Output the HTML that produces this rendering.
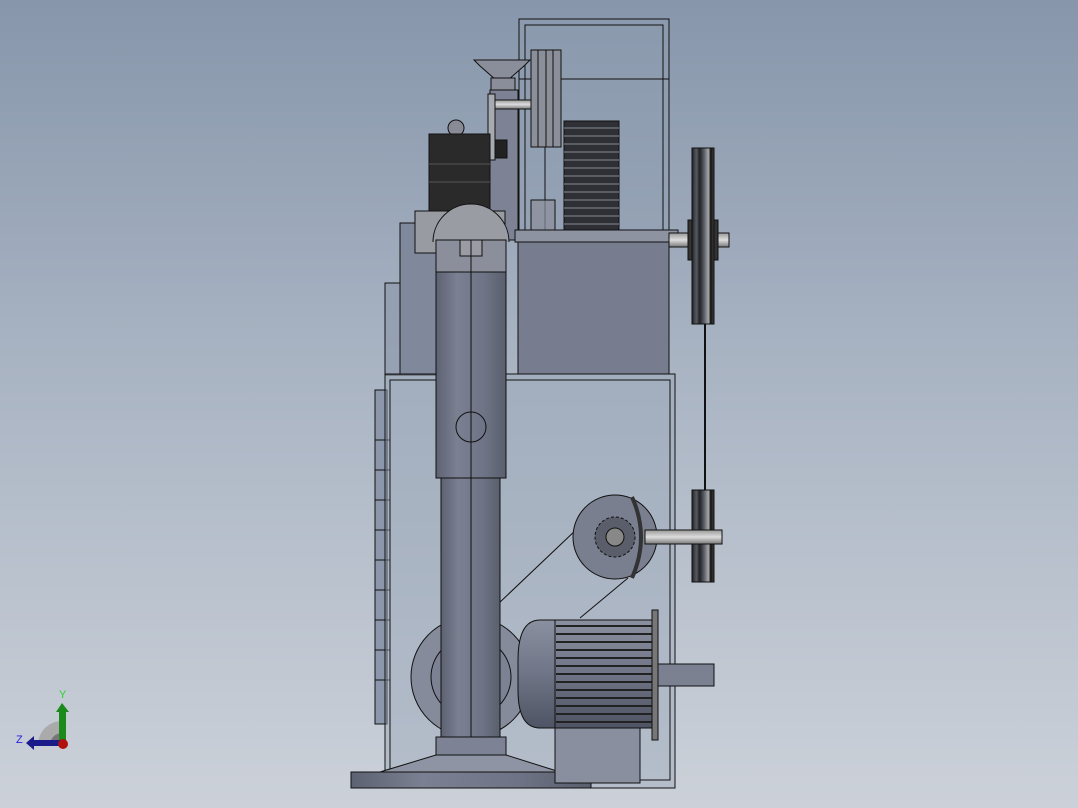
<!DOCTYPE html>
<html><head><meta charset="utf-8"><style>
html,body{margin:0;padding:0;width:1078px;height:808px;overflow:hidden}
body{background:linear-gradient(#8796ab 0%,#a9b4c3 45%,#ccd1d9 100%)}
svg{position:absolute;left:0;top:0}
</style></head><body>
<svg width="1078" height="808" viewBox="0 0 1078 808" xmlns="http://www.w3.org/2000/svg" stroke="#111" stroke-width="1">
<defs>
<linearGradient id="col" x1="0" x2="1"><stop offset="0" stop-color="#5d6272"/><stop offset=".3" stop-color="#7b8092"/><stop offset=".7" stop-color="#6e7385"/><stop offset="1" stop-color="#5a5f6e"/></linearGradient>
<linearGradient id="sh" x1="0" x2="0" y1="0" y2="1"><stop offset="0" stop-color="#999"/><stop offset=".5" stop-color="#ddd"/><stop offset="1" stop-color="#777"/></linearGradient>
<linearGradient id="mot" x1="0" x2="0" y1="0" y2="1"><stop offset="0" stop-color="#8a90a0"/><stop offset=".5" stop-color="#6f7586"/><stop offset="1" stop-color="#4f5464"/></linearGradient>
<linearGradient id="pul" x1="0" x2="1"><stop offset="0" stop-color="#222"/><stop offset=".2" stop-color="#555a66"/><stop offset=".35" stop-color="#222"/><stop offset=".55" stop-color="#5a5e6a"/><stop offset=".75" stop-color="#aaa"/><stop offset=".85" stop-color="#111"/><stop offset="1" stop-color="#444"/></linearGradient>
</defs>
<rect x="519" y="19" width="150" height="212" fill="#8d9bb0" fill-opacity=".5"/>
<rect x="525" y="25" width="138" height="206" fill="none"/>
<line x1="519" y1="79" x2="669" y2="79"/>
<rect x="490" y="90" width="28" height="150" fill="#7d8394"/>
<path d="M474 60 L530 60 L524 66 L508 80 L496 80 L480 66 Z" fill="#8a8e9a"/>
<rect x="491" y="78" width="24" height="12" fill="#8a8e9a"/>
<rect x="488" y="94" width="7" height="66" fill="#a8aab2"/>
<rect x="495" y="100" width="42" height="9" fill="url(#sh)"/>
<rect x="495" y="140" width="12" height="18" fill="#222"/>
<rect x="531" y="50" width="30" height="97" fill="#8b8f9a"/>
<line x1="538" y1="50" x2="538" y2="147"/><line x1="546" y1="50" x2="546" y2="147"/><line x1="553" y1="50" x2="553" y2="147"/>
<line x1="545" y1="147" x2="545" y2="232"/>
<rect x="531" y="200" width="24" height="32" fill="#8b8f9a" fill-opacity=".7"/>
<rect x="564" y="121" width="55" height="115" fill="#2e3036"/>
<g stroke="#6a6c74" stroke-width="1.5">
<line x1="564" y1="128" x2="619" y2="128"/><line x1="564" y1="136" x2="619" y2="136"/><line x1="564" y1="144" x2="619" y2="144"/><line x1="564" y1="152" x2="619" y2="152"/><line x1="564" y1="160" x2="619" y2="160"/><line x1="564" y1="168" x2="619" y2="168"/><line x1="564" y1="176" x2="619" y2="176"/><line x1="564" y1="184" x2="619" y2="184"/><line x1="564" y1="192" x2="619" y2="192"/><line x1="564" y1="200" x2="619" y2="200"/><line x1="564" y1="208" x2="619" y2="208"/><line x1="564" y1="216" x2="619" y2="216"/><line x1="564" y1="224" x2="619" y2="224"/></g>
<circle cx="456" cy="128" r="8" fill="#888b96"/>
<rect x="429" y="134" width="61" height="78" fill="#2a2a2a"/>
<line x1="429" y1="164" x2="490" y2="164" stroke="#555"/><line x1="429" y1="182" x2="490" y2="182" stroke="#555"/>
<rect x="515" y="230" width="163" height="12" fill="#8e93a2"/>
<rect x="518" y="242" width="151" height="132" fill="#777c8f"/>
<rect x="669" y="233" width="60" height="14" fill="url(#sh)"/>
<rect x="692" y="148" width="22" height="176" fill="url(#pul)"/>
<rect x="688" y="220" width="4" height="40" fill="#333"/><rect x="714" y="220" width="4" height="40" fill="#333"/>
<line x1="705" y1="324" x2="705" y2="492" stroke-width="2"/>
<rect x="692" y="490" width="22" height="92" fill="url(#pul)"/>
<rect x="385" y="283" width="50" height="92" fill="#8a94a8" fill-opacity=".6"/>
<rect x="400" y="223" width="36" height="152" fill="#80889c"/>
<rect x="415" y="211" width="90" height="42" fill="#999ba3"/>
<rect x="375" y="390" width="12" height="334" fill="#8c97ab"/>
<g fill="none"><line x1="375" y1="440" x2="390" y2="440"/><line x1="375" y1="470" x2="390" y2="470"/><line x1="375" y1="500" x2="390" y2="500"/><line x1="375" y1="530" x2="390" y2="530"/><line x1="375" y1="560" x2="390" y2="560"/><line x1="375" y1="590" x2="390" y2="590"/><line x1="375" y1="620" x2="390" y2="620"/><line x1="375" y1="650" x2="390" y2="650"/><line x1="375" y1="680" x2="390" y2="680"/></g>
<rect x="385" y="374" width="290" height="414" fill="#9aa6b8" fill-opacity=".45"/>
<rect x="390" y="380" width="280" height="400" fill="none"/>
<circle cx="471" cy="677" r="60" fill="#868b9c"/>
<circle cx="471" cy="677" r="40" fill="#7c8193"/>
<line x1="498" y1="604" x2="578" y2="528"/><line x1="580" y1="618" x2="628" y2="578"/>
<circle cx="615" cy="537" r="42" fill="#7a7f90"/>
<circle cx="615" cy="537" r="20" fill="#5a5e6a" stroke-dasharray="3 2"/>
<circle cx="615" cy="537" r="9" fill="#888"/>
<path d="M632 497 Q650 537 632 578" fill="none" stroke-width="4" stroke="#333"/>
<rect x="645" y="530" width="77" height="14" fill="url(#sh)"/>
<rect x="436" y="240" width="70" height="238" fill="url(#col)"/>
<path d="M433 242 A38 38 0 0 1 509 242" fill="#9a9ca4"/>
<rect x="436" y="240" width="70" height="32" fill="#8b8f9c"/>
<rect x="460" y="240" width="22" height="16" fill="#9a9ca4"/>
<circle cx="471" cy="427" r="15" fill="none"/>
<rect x="441" y="478" width="59" height="260" fill="url(#col)"/>
<line x1="471" y1="240" x2="471" y2="788"/>
<rect x="436" y="737" width="70" height="18" fill="#7d8294"/>
<path d="M436 755 L506 755 L560 772 L380 772 Z" fill="#8f94a4"/>
<rect x="351" y="772" width="240" height="16" fill="url(#col)"/>
<path d="M555 620 L555 728 L540 728 Q518 728 518 690 L518 660 Q518 620 540 620 Z" fill="url(#mot)"/>
<rect x="555" y="620" width="98" height="108" fill="url(#mot)"/>
<g stroke="#222" stroke-width="2"><line x1="556" y1="626" x2="652" y2="626"/><line x1="556" y1="634" x2="652" y2="634"/><line x1="556" y1="642" x2="652" y2="642"/><line x1="556" y1="650" x2="652" y2="650"/><line x1="556" y1="658" x2="652" y2="658"/><line x1="556" y1="666" x2="652" y2="666"/><line x1="556" y1="674" x2="652" y2="674"/><line x1="556" y1="682" x2="652" y2="682"/><line x1="556" y1="690" x2="652" y2="690"/><line x1="556" y1="698" x2="652" y2="698"/><line x1="556" y1="706" x2="652" y2="706"/><line x1="556" y1="714" x2="652" y2="714"/><line x1="556" y1="722" x2="652" y2="722"/></g>
<rect x="652" y="610" width="6" height="130" fill="#777"/>
<rect x="658" y="664" width="56" height="22" fill="#7c8192"/>
<rect x="555" y="728" width="85" height="55" fill="#8a8fa0"/>
<g stroke="none">
<path d="M62 745 L38 745 A24 24 0 0 1 62 721 Z" fill="#aaa"/>
<path d="M62 745 L50 745 A12 12 0 0 1 62 733 Z" fill="#777"/>
<rect x="59" y="710" width="7" height="35" fill="#1a8a1a"/>
<path d="M56 712 L62 703 L69 712 Z" fill="#1a8a1a"/>
<rect x="32" y="740" width="30" height="6" fill="#1a1a8a"/>
<path d="M34 736 L26 743 L34 750 Z" fill="#1a1a8a"/>
<circle cx="63" cy="744" r="5" fill="#b01010"/>
</g>
<g stroke="none" font-family="Liberation Sans, sans-serif" font-size="11">
<text x="59" y="698" fill="#2bd42b">Y</text>
<text x="16" y="743" fill="#2222dd">Z</text>
</g>
</svg>
</body></html>
